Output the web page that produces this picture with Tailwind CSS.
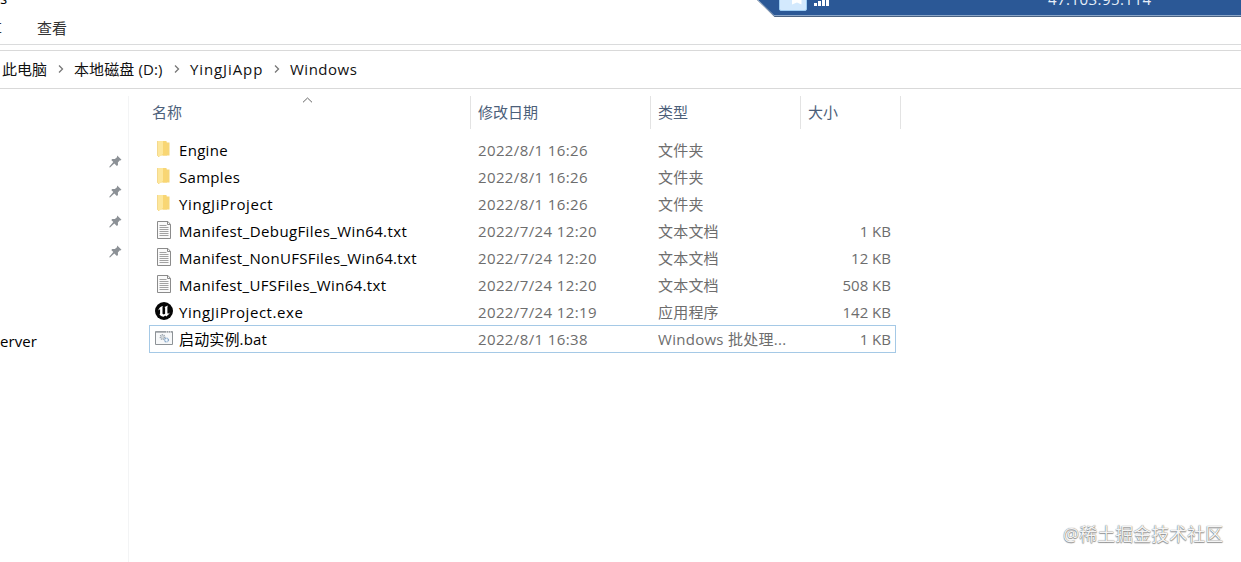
<!DOCTYPE html>
<html lang="zh-CN">
<head>
    <meta charset="UTF-8">
    <meta name="viewport" content="width=device-width, initial-scale=1.0">
    <script src="https://cdn.jsdelivr.net/npm/@tailwindcss/browser@4"></script>
    <title>Windows</title>
</head>
<body class="bg-white overflow-hidden">
    <svg class="hidden">
        <symbol id="folder" viewBox="0 0 18 18">
            <path d="M3 1h8.500v1.500h3v13H3z" fill="#f6d678" />
            <path d="M2.500 1h5.500v13l-4 3-1.500-1.500z" fill="#fde79c" />
            <path d="M8.500 1.500H11l1 2v12H8z" fill="#f9d673" />
            <path d="M2.500 1v14.500l1.500 1.500" fill="none" stroke="#f0cd71" stroke-width=".7" />
        </symbol>
        <symbol id="text" viewBox="0 0 18 18">
            <path d="M2.500.5h10.500l2.500 3v14h-13z" fill="#fafafa" stroke="#8b8b8b" />
            <path d="M12.500.5v3h3" fill="none" stroke="#8b8b8b" />
            <path d="M4.500 4.500h7M4.500 6.500h9M4.500 8.500h9M4.500 10.500h9M4.500 12.500h9M4.500 14.500h9" stroke="#a2a2a2" />
        </symbol>
        <symbol id="unreal" viewBox="0 0 18 18">
            <circle cx="9" cy="9" r="9" fill="#050505" />
            <path d="M3.200 8.500C3.800 6 5.600 4.500 8 3.900L7.500 5v6.700l1.300.9 1.300-.9V5.800L9.500 5l3.700-1.600-.8 1.300v6.500l.8.500 1.600-1.100c-.7 1.700-2 3-3.500 3.800l-1.100-.8-1.500 1.200c-2-.3-3.500-1.200-4.200-2.500l.6-.7V7.200c-.7.100-1.300.5-1.900 1.300z" fill="#fff" />
        </symbol>
        <symbol id="bat" viewBox="0 0 18 18">
            <path d="M.5 2.500h17v13H.5z" fill="#f7f8f9" stroke="#8d9296" />
            <path d="M1 3h16" stroke="#9ca1a5" stroke-width="1.500" />
            <path d="M11 3h5" stroke="#fff" stroke-dasharray="1 1" />
            <circle cx="7.500" cy="8" r="2.300" fill="#e4eaf0" stroke="#9aa2aa" stroke-width="1.200" stroke-dasharray="1.200 .6" />
            <circle cx="7.500" cy="8" r="1" fill="#fff" stroke="#9aa2aa" stroke-width=".6" />
            <circle cx="11.500" cy="11" r="2" fill="#dceaf7" stroke="#8ba9c8" stroke-width="1.200" stroke-dasharray="1.200 .5" />
            <circle cx="11.500" cy="11" r=".7" fill="#fff" />
        </symbol>
        <symbol id="pin" viewBox="0 0 13 13">
            <path d="M8.200.5l4.300 4.300-1.100.6-.5-.2-2 2.300.1 2.600-1.100.9-2.600-2.600L1 12.500l-.7-.2L.5 11.600l3.800-4.500-2-2.200 1-1 2.600.2 2.300-2-.2-.6z" fill="#8c9196" />
        </symbol>
        <symbol id="chevron" viewBox="0 0 6 8">
            <path d="M1 .5L4.500 4 1 7.500" fill="none" stroke="#777" stroke-width="1.300" />
        </symbol>
    </svg>

    <div class="w-[1241px] h-[562px] relative overflow-hidden flex flex-col whitespace-nowrap text-[15px] text-black font-['Open_Sans','Noto_Sans_CJK_SC',sans-serif]">
        <!-- ribbon -->
        <div class="h-[45px] shrink-0 border-b border-[#dadbdc] relative">
            <span class="absolute left-0 -top-[12px] leading-5">s</span>
            <div class="flex pt-[18px] leading-5 text-[#333]">
                <span class="w-[37px] overflow-hidden"><span class="-ml-[13px]">享</span></span>
                <span>查看</span>
            </div>
        </div>
        <!-- address bar -->
        <div class="h-[39px] mt-[5px] shrink-0 border-y border-[#d9d9d9]">
            <div class="flex items-center h-[36px] pl-[2px] text-[#111]">
                <span class="w-[56px]">此电脑</span>
                <svg class="w-[6px] h-[8px] mr-[10px]"><use href="#chevron" /></svg>
                <span class="w-[100px] tracking-[.1px]">本地磁盘 (D:)</span>
                <svg class="w-[6px] h-[8px] mr-[10px]"><use href="#chevron" /></svg>
                <span class="w-[84px] tracking-[.9px]">YingJiApp</span>
                <svg class="w-[6px] h-[8px] mr-[10px]"><use href="#chevron" /></svg>
                <span class="tracking-[.5px]">Windows</span>
            </div>
        </div>

        <div class="flex grow">
            <aside class="w-[129px] shrink-0 mt-[7px] border-r border-[#f3f4f5]">
                <div class="flex flex-col gap-[17px] items-end pr-[6px] pt-[59px] pb-[73px]">
                    <svg class="size-[13px]"><use href="#pin" /></svg>
                    <svg class="size-[13px]"><use href="#pin" /></svg>
                    <svg class="size-[13px]"><use href="#pin" /></svg>
                    <svg class="size-[13px]"><use href="#pin" /></svg>
                </div>
                <span class="block leading-5 tracking-[.1px]">erver</span>
            </aside>

            <main class="w-[772px] relative">
                <svg class="absolute left-[173px] top-[8px] w-[11px] h-[6px]" viewBox="0 0 11 6"><path d="M1 5.300L5.500 1 10 5.300" fill="none" stroke="#666" /></svg>
                <div class="flex h-[33px] mt-[7px] mb-[8px] leading-[33px] text-[#4c607a]">
                    <span class="w-[342px] pl-[23px] border-r border-[#e3e3e3]">名称</span>
                    <span class="w-[180px] pl-[7px] border-r border-[#e3e3e3]">修改日期</span>
                    <span class="w-[150px] pl-[7px] border-r border-[#e3e3e3]">类型</span>
                    <span class="w-[100px] pl-[7px] border-r border-[#e3e3e3]">大小</span>
                </div>
                <div class="ml-[20px] w-[747px] text-[#6d6d6d] leading-[27px]">
                    <div class="flex h-[27px] pl-[6px] pr-[5px]">
                        <svg class="size-[18px] mt-[3px] mr-[6px]"><use href="#folder" /></svg>
                        <span class="w-[299px] text-black tracking-[.3px]">Engine</span>
                        <span class="w-[180px] tracking-[.38px]">2022/8/1 16:26</span>
                        <span class="w-[140px] tracking-[.2px]">文件夹</span>
                    </div>
                    <div class="flex h-[27px] pl-[6px] pr-[5px]">
                        <svg class="size-[18px] mt-[3px] mr-[6px]"><use href="#folder" /></svg>
                        <span class="w-[299px] text-black tracking-[.3px]">Samples</span>
                        <span class="w-[180px] tracking-[.38px]">2022/8/1 16:26</span>
                        <span class="w-[140px] tracking-[.2px]">文件夹</span>
                    </div>
                    <div class="flex h-[27px] pl-[6px] pr-[5px]">
                        <svg class="size-[18px] mt-[3px] mr-[6px]"><use href="#folder" /></svg>
                        <span class="w-[299px] text-black tracking-[.62px]">YingJiProject</span>
                        <span class="w-[180px] tracking-[.38px]">2022/8/1 16:26</span>
                        <span class="w-[140px] tracking-[.2px]">文件夹</span>
                    </div>
                    <div class="flex h-[27px] pl-[6px] pr-[5px]">
                        <svg class="size-[18px] mt-[3px] mr-[6px]"><use href="#text" /></svg>
                        <span class="w-[299px] text-black tracking-[.38px]">Manifest_DebugFiles_Win64.txt</span>
                        <span class="w-[180px] tracking-[.38px]">2022/7/24 12:20</span>
                        <span class="w-[140px] tracking-[.2px]">文本文档</span>
                        <span class="grow text-right">1 KB</span>
                    </div>
                    <div class="flex h-[27px] pl-[6px] pr-[5px]">
                        <svg class="size-[18px] mt-[3px] mr-[6px]"><use href="#text" /></svg>
                        <span class="w-[299px] text-black tracking-[.34px]">Manifest_NonUFSFiles_Win64.txt</span>
                        <span class="w-[180px] tracking-[.38px]">2022/7/24 12:20</span>
                        <span class="w-[140px] tracking-[.2px]">文本文档</span>
                        <span class="grow text-right">12 KB</span>
                    </div>
                    <div class="flex h-[27px] pl-[6px] pr-[5px]">
                        <svg class="size-[18px] mt-[3px] mr-[6px]"><use href="#text" /></svg>
                        <span class="w-[299px] text-black tracking-[.34px]">Manifest_UFSFiles_Win64.txt</span>
                        <span class="w-[180px] tracking-[.38px]">2022/7/24 12:20</span>
                        <span class="w-[140px] tracking-[.2px]">文本文档</span>
                        <span class="grow text-right">508 KB</span>
                    </div>
                    <div class="flex h-[27px] pl-[6px] pr-[5px]">
                        <svg class="size-[18px] mt-[3px] mr-[6px]"><use href="#unreal" /></svg>
                        <span class="w-[299px] text-black tracking-[.56px]">YingJiProject.exe</span>
                        <span class="w-[180px] tracking-[.38px]">2022/7/24 12:19</span>
                        <span class="w-[140px] tracking-[.2px]">应用程序</span>
                        <span class="grow text-right">142 KB</span>
                    </div>
                    <div class="flex h-[28px] -mt-px pl-[5px] pr-[4px] border border-[#a5c9e6]">
                        <svg class="size-[18px] mt-[3px] mr-[6px]"><use href="#bat" /></svg>
                        <span class="w-[299px] text-black tracking-[.15px]">启动实例.bat</span>
                        <span class="w-[180px] tracking-[.38px]">2022/8/1 16:38</span>
                        <span class="w-[140px] tracking-[.28px]">Windows 批处理...</span>
                        <span class="grow text-right">1 KB</span>
                    </div>
                </div>
            </main>
        </div>

        <!-- remote desktop connection bar -->
        <div class="absolute left-[757px] top-0 w-[484px] h-[17px] overflow-hidden">
            <svg class="absolute inset-0" width="484" height="17">
                <path d="M0 0h484v17H17.500z" fill="#4a6282" />
                <path d="M1.500 0H484v15H17z" fill="#2b5896" />
                <path d="M1 0l16 15.500h467" fill="none" stroke="#8ba6c8" />
                <rect x="22.500" y="-8" width="27" height="18.500" rx="1.500" fill="#d3e9fd" stroke="#9dccf3" />
                <path d="M35 0h9.500v4.500l-4.500-2-5 2z" fill="#fff" />
                <path d="M57 3h3v3h-3zM61 1h3v5h-3zM65 0h3v6h-3zM69 0h3v6h-3z" fill="#fff" />
            </svg>
            <span class="absolute left-[291px] -top-[11px] leading-5 text-[#e7eff9] tracking-[.45px]">47.103.95.114</span>
        </div>
        <!-- watermark -->
        <div class="absolute left-[1063px] top-[522px] leading-6 text-[18px] text-[#f4f4f4] [text-shadow:0_0_1px_#555,0_1px_1px_#999]">@稀土掘金技术社区</div>
    </div>
</body>
</html>
